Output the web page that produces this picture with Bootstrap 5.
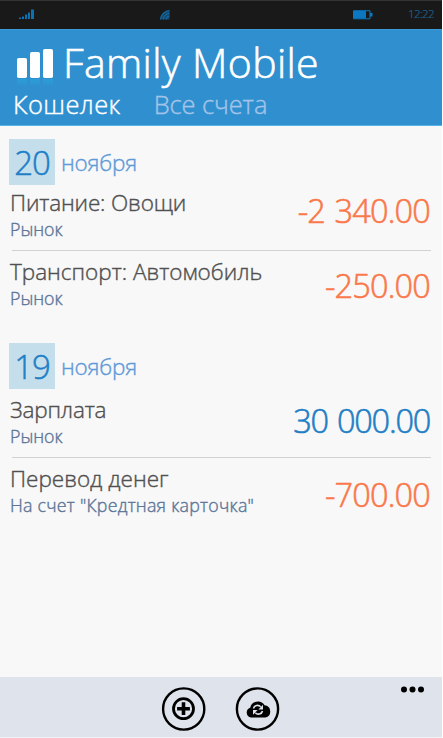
<!DOCTYPE html>
<html lang="ru">
<head>
<meta charset="utf-8">
<meta name="viewport" content="width=device-width, initial-scale=1">
<title>Family Mobile</title>
<link href="https://cdn.jsdelivr.net/npm/bootstrap@5.3.0/dist/css/bootstrap.min.css" rel="stylesheet">
<style>
  body { font-family: "Open Sans", "Noto Sans", sans-serif; font-weight: 300; -webkit-text-stroke: .4px currentColor; background: #f8f8f8; height: 738px; overflow: hidden; white-space: nowrap; }
  svg { -webkit-text-stroke: 0; }
  .phone { height: 738px; border-right: 1px solid #fff; }
  .status { height: 29px; background: #191919; border-top: 1px solid #333; padding: 0 8px 1px 19px; }
  .sig { margin-right: 125px; }
  .wifi { margin-right: 182px; }
  .bat { margin-right: 35px; }
  .clock { font-size: 11.5px; line-height: 26px; color: #1c6590; letter-spacing: -.6px; -webkit-text-stroke-width: .2px; margin-top: -1px; }
  .app-head { height: 97px; background: #3090cf; border-top: 1px solid #3b9bd9; border-bottom: 1px solid #58b4e6; padding: 7px 0 0 13px; }
  .app-name { font-size: 41px; line-height: 50px; font-weight: 300; color: #fff; letter-spacing: .35px; margin: 0; -webkit-text-stroke-width: .6px; }
  .logo { margin: 11px 10px 0 4px; }
  .tabs { font-size: 25.5px; line-height: 30px; margin-top: 2px; letter-spacing: .4px; }
  .tabs a { color: #fff; text-decoration: none; }
  .tabs a + a { color: #a3c3e8; margin-left: 33px; letter-spacing: -.1px; }
  .day-group { padding-top: 13px; height: 203px; }
  .day-group.next { padding-top: 14px; }
  .day { height: 46px; margin-left: 9px; }
  .day-num { width: 46px; background: #c5deeb; color: #1f7fc6; font-size: 33px; line-height: 48px; letter-spacing: -1.2px; text-align: center; -webkit-text-stroke-width: .5px; }
  .day-month { font-size: 22.5px; line-height: 48px; color: #5f9ad8; margin-left: 6px; letter-spacing: -.2px; }
  .entries { padding: 0 12px 0 10px; }
  .entry { height: 69px; padding-top: 8px; }
  .entry.first { height: 65px; padding-top: 5px; }
  .entry-title { font-size: 22.5px; line-height: 26px; color: #505050; }
  .entry.first .entry-title { letter-spacing: -.15px; }
  .entry-sub { font-size: 17.8px; line-height: 24px; margin-top: 1px; color: #5c7698; }
  .entry-sub.long { letter-spacing: .25px; }
  .rule { height: 1px; background: #d2d2d2; margin: 0 -1px 0 2px; }
  .sum { font-size: 32.5px; line-height: 40px; letter-spacing: -.85px; word-spacing: 2px; color: #fa784a; margin-top: 1px; -webkit-text-stroke-width: .6px; }
  .rule + .entry .sum { margin-top: 7px; }
  .sum.plus { color: #1f7fc6; letter-spacing: -1.25px; margin-top: 4px; }
  .day-group.next .entry.first { height: 68px; padding-top: 8px; }
  .day-group.next .rule + .entry .sum { margin-top: 9px; }
  .app-bar { height: 61px; background: #dfe3ec; border-bottom: 1px solid #f0f2f7; padding: 9px 17px 0 161px; }
</style>
</head>
<body>
<div class="phone d-flex flex-column">
  <div class="status d-flex align-items-center flex-shrink-0">
    <svg class="sig" width="16" height="11" viewBox="0 0 16 11" fill="#0b71b5"><path d="M0 8.500h2V10H0zM3 7.500h2V10H3zM6 5.500h2V10H6zM9 3.500h2V10H9zM12 .500h3V10h-3z"/></svg>
    <svg class="wifi" width="11" height="10" viewBox="0 0 11 10"><path d="M0 9.500A9.500 9.500 0 0 1 9.500 0v9.500z" fill="#14496d"/><g fill="none" stroke="#1674b4" stroke-width=".9"><path d="M.700 9.500A9 9 0 0 1 9.500 .7M3.300 9.500A6.500 6.500 0 0 1 9.500 3.300M6 9.500A4 4 0 0 1 9.500 6"/></g></svg>
    <svg class="bat" width="20" height="10" viewBox="0 0 20 10"><path d="M.5.700h16.500v8.100H.5z" fill="none" stroke="#0b78c0"/><path d="M1 1h12v7.500H1zM17 3h2.500v3.500H17z" fill="#0b78c0"/></svg>
    <span class="clock">12:22</span>
  </div>
  <header class="app-head flex-shrink-0">
    <div class="d-flex">
      <svg class="logo" width="36" height="38" viewBox="0 0 36 38"><defs><linearGradient id="fade" x1="0" y1="0" x2="0" y2="1"><stop offset="0" stop-color="#2a9fd8"/><stop offset="1" stop-color="#2a9fd8" stop-opacity="0"/></linearGradient></defs><g fill="#fff"><rect x="0" y="10" width="10" height="20" rx="1.800"/><rect x="13" y="4" width="10" height="26" rx="1.800"/><rect x="26" y="1" width="10" height="29" rx="1.800"/></g><path d="M0 31h10v7H0zM13 31h10v7H13zM26 31h10v7H26z" fill="url(#fade)"/></svg>
      <h1 class="app-name">Family Mobile</h1>
    </div>
    <nav class="tabs d-flex"><a href="#">Кошелек</a><a href="#">Все счета</a></nav>
  </header>
  <main class="flex-grow-1">
    <section class="day-group">
      <div class="day d-flex"><div class="day-num">20</div><div class="day-month">ноября</div></div>
      <div class="entries">
        <div class="entry first d-flex justify-content-between"><div><div class="entry-title">Питание: Овощи</div><div class="entry-sub">Рынок</div></div><div class="sum">-2 340.00</div></div>
        <div class="rule"></div>
        <div class="entry d-flex justify-content-between"><div><div class="entry-title">Транспорт: Автомобиль</div><div class="entry-sub">Рынок</div></div><div class="sum">-250.00</div></div>
      </div>
    </section>
    <section class="day-group next">
      <div class="day d-flex"><div class="day-num">19</div><div class="day-month">ноября</div></div>
      <div class="entries">
        <div class="entry first d-flex justify-content-between"><div><div class="entry-title">Зарплата</div><div class="entry-sub">Рынок</div></div><div class="sum plus">30 000.00</div></div>
        <div class="rule"></div>
        <div class="entry d-flex justify-content-between"><div><div class="entry-title">Перевод денег</div><div class="entry-sub long">На счет "Кредтная карточка"</div></div><div class="sum">-700.00</div></div>
      </div>
    </section>
  </main>
  <footer class="app-bar d-flex flex-shrink-0">
    <svg width="46" height="46" viewBox="0 0 46 46" fill="none" stroke="#000"><circle cx="22.700" cy="23" r="20.600" stroke-width="2.400"/><circle cx="22.500" cy="22.700" r="10" stroke-width="2.800"/><path d="M22.500 16.300v12.800M16.100 22.700h12.800" stroke-width="3.600"/></svg>
    <svg class="ms-4 me-auto" width="56" height="46" viewBox="-4 0 56 46"><circle cx="22.500" cy="23" r="20.600" fill="none" stroke="#000" stroke-width="2.400"/><path d="M16 31.500a5 5 0 0 1-.8-9.700A7.800 7.800 0 0 1 29.500 19.300a6.200 6.200 0 0 1 1 12.200z"/><g fill="none" stroke="#dfe3ec" stroke-width="1.600"><path d="M18.500 22.500c.8-3.500 5-4 7.200-1.700M27.500 25c-.8 3.500-5 4-7.200 1.700"/></g><path d="M28 18.800v4.600h-4.600zM18 28.700v-4.600h4.600z" fill="#dfe3ec"/></svg>
    <svg width="25" height="8" viewBox="0 0 25 8"><circle cx="4" cy="3.500" r="3"/><circle cx="12.500" cy="3.500" r="3"/><circle cx="21" cy="3.500" r="3"/></svg>
  </footer>
</div>
</body>
</html>
